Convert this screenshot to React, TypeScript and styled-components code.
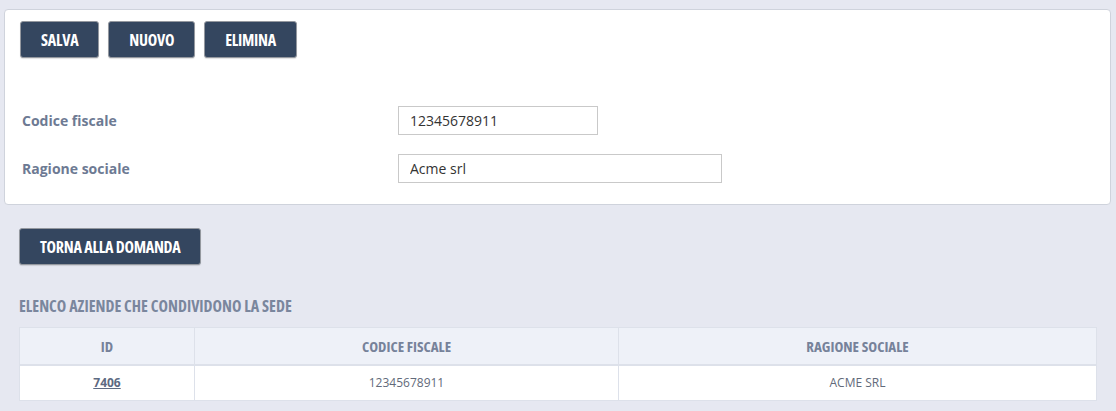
import React from "react";
import styled, { createGlobalStyle } from "styled-components";

const GlobalStyle = createGlobalStyle`
  html, body { margin: 0; padding: 0; background: #e6e8f1; }
  body { font-family: "Open Sans", "Liberation Sans", sans-serif; }
  * { box-sizing: border-box; }
`;

const Page = styled.div`
  padding: 9px 5px 0 4px;
  display: flex;
  flex-direction: column;
`;

const Card = styled.section`
  background: #ffffff;
  border: 1px solid #cfd3dc;
  border-radius: 4px;
  padding: 11px 15px 21px 15px;
`;

const Toolbar = styled.div`
  display: flex;
  gap: 9px;
`;

const Button = styled.button`
  height: 37px;
  padding: 0 20px;
  background: #34465f;
  color: #ffffff;
  border: 1px solid #94989f;
  border-radius: 3px;
  box-shadow: 0 1px 1px rgba(0, 0, 0, 0.12);
  font-family: "Open Sans", "Liberation Sans", sans-serif;
  font-stretch: 75%;
  font-weight: 700;
  font-size: 16px;
  letter-spacing: -0.25px;
  text-transform: uppercase;
  cursor: pointer;
`;

const Form = styled.div`
  margin-top: 48px;
  display: grid;
  grid-template-columns: 378px 1fr;
  row-gap: 19px;
  align-items: center;
`;

const Label = styled.label`
  padding-left: 2px;
  color: #6d7a93;
  font-weight: 700;
  font-size: 14px;
`;

const Input = styled.input<{ $w: number }>`
  width: ${(p) => p.$w}px;
  height: 29px;
  border: 1px solid #c9c9c9;
  padding: 0 11px;
  font-family: "Open Sans", "Liberation Sans", sans-serif;
  font-size: 14px;
  color: #333333;
  background: #fff;
  outline: none;
`;

const Below = styled.div`
  padding: 23px 0 0 15px;
  display: flex;
  flex-direction: column;
  align-items: flex-start;
`;

const Heading = styled.h3`
  margin: 30px 0 0 0;
  line-height: 22px;
  color: #7a869d;
  font-weight: 700;
  font-stretch: 75%;
  font-size: 16px;
  text-transform: uppercase;
`;

const Table = styled.table`
  margin-top: 10px;
  width: 1078px;
  border-collapse: collapse;
  background: #fff;
`;

const Th = styled.th<{ $w?: number }>`
  height: 37px;
  padding: 0;
  width: ${(p) => (p.$w ? `${p.$w}px` : "auto")};
  background: #eef1f8;
  border: 1px solid #dde1ea;
  border-bottom-width: 2px;
  color: #76829a;
  font-weight: 700;
  font-stretch: 75%;
  font-size: 15px;
  text-transform: uppercase;
  text-align: center;
`;

const Td = styled.td`
  height: 36px;
  padding: 0;
  border: 1px solid #dde1ea;
  color: #626a7a;
  font-size: 12px;
  text-align: center;
`;

const IdLink = styled.a`
  color: #5d6a82;
  font-weight: 700;
  text-decoration: underline;
`;

export default function App() {
  return (
    <>
      <GlobalStyle />
      <Page>
        <Card>
          <Toolbar>
            <Button>Salva</Button>
            <Button>Nuovo</Button>
            <Button>Elimina</Button>
          </Toolbar>
          <Form>
            <Label>Codice fiscale</Label>
            <Input $w={200} defaultValue="12345678911" />
            <Label>Ragione sociale</Label>
            <Input $w={324} defaultValue="Acme srl" />
          </Form>
        </Card>
        <Below>
          <Button>Torna alla domanda</Button>
          <Heading>Elenco aziende che condividono la sede</Heading>
          <Table>
            <thead>
              <tr>
                <Th $w={175}>ID</Th>
                <Th $w={424}>Codice fiscale</Th>
                <Th>Ragione sociale</Th>
              </tr>
            </thead>
            <tbody>
              <tr>
                <Td>
                  <IdLink href="#">7406</IdLink>
                </Td>
                <Td>12345678911</Td>
                <Td>ACME SRL</Td>
              </tr>
            </tbody>
          </Table>
        </Below>
      </Page>
    </>
  );
}
